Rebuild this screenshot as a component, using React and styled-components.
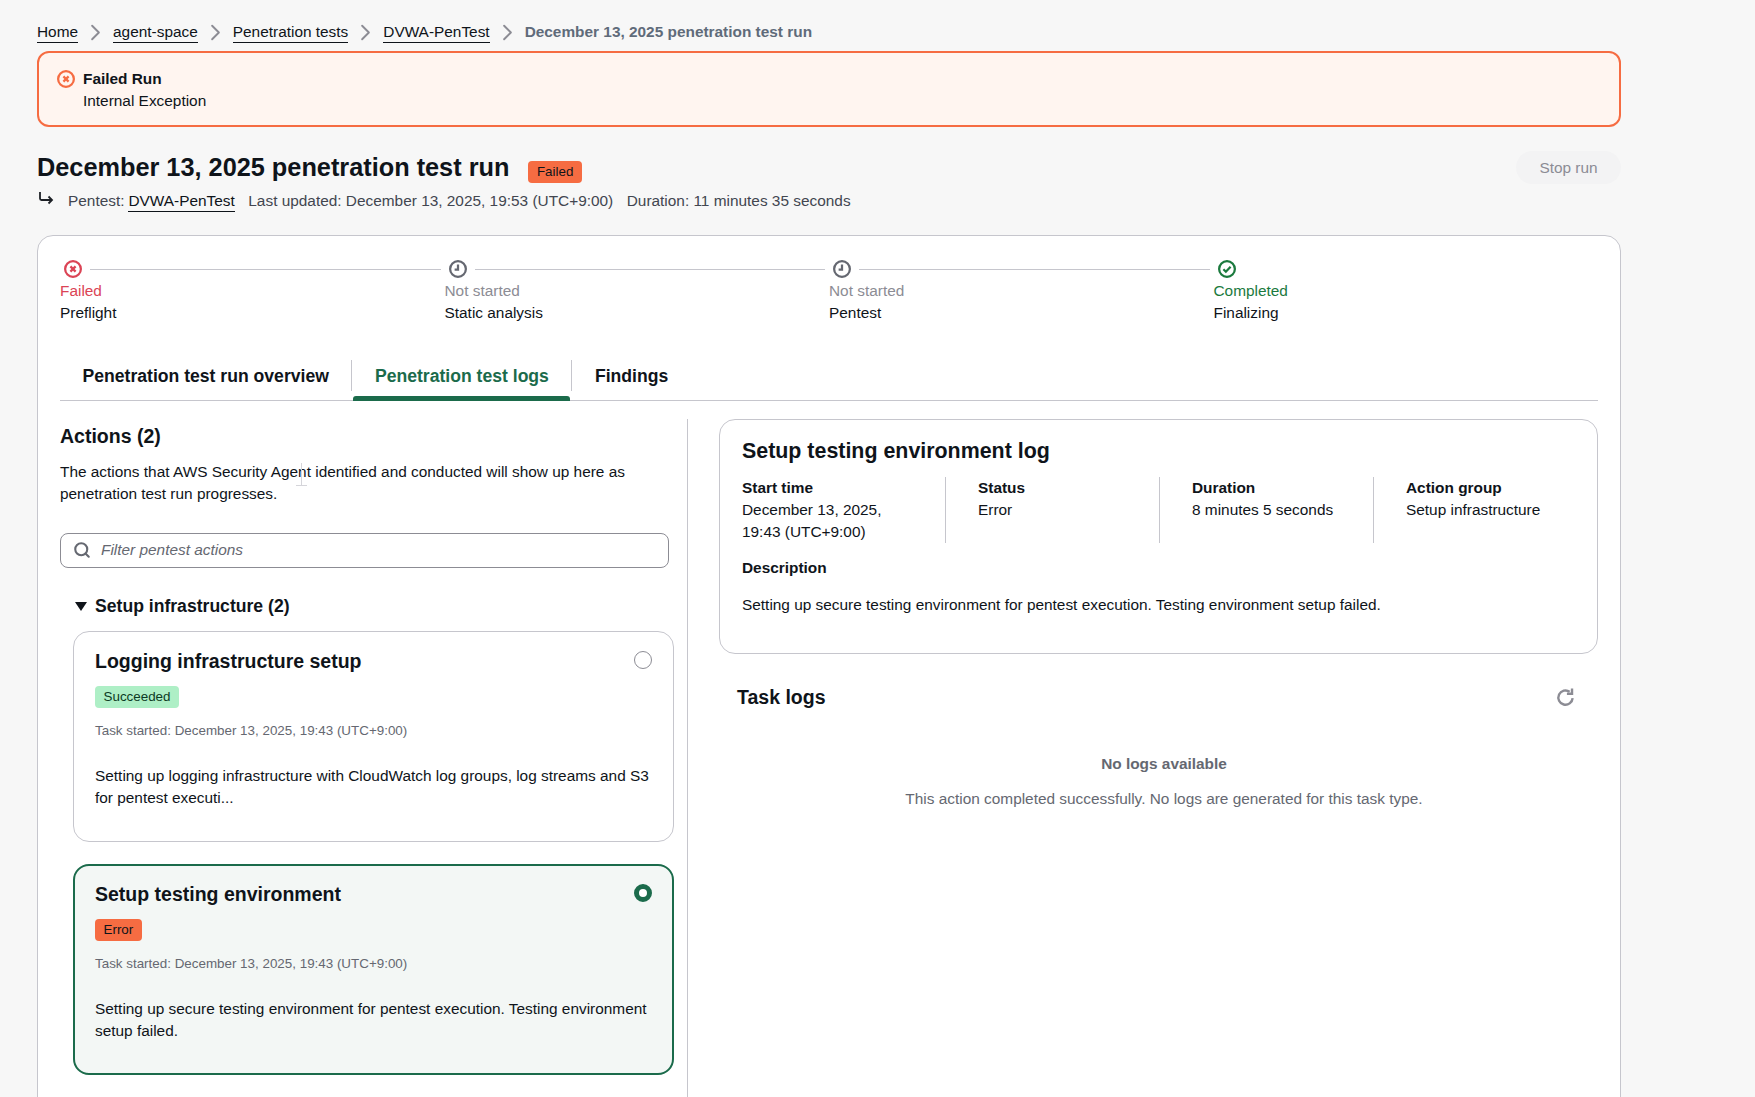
import React from "react";
import styled, { createGlobalStyle } from "styled-components";
import { ChevronRight, Search } from "lucide-react";

const Global = createGlobalStyle`
  html, body {
    margin: 0;
    height: 1097px;
    overflow: hidden;
    background: #f7f7f7;
    font-family: "Liberation Sans", Arial, sans-serif;
    font-size: 15.4px;
    line-height: 22px;
    color: #0f141a;
  }
  * { box-sizing: border-box; }
`;

const Page = styled.div`
  width: 1621px;
  padding: 21px 0 0 37px;
`;

const Crumbs = styled.nav`
  display: flex;
  align-items: center;
  height: 22px;
`;

const CrumbLink = styled.a`
  color: #0f141a;
  border-bottom: 1px solid #0f141a;
  line-height: 20px;
  margin-top: 1px;
`;

const CrumbSep = styled(ChevronRight)`
  width: 27px;
  height: 27px;
  color: #8c8c94;
  margin: 0 4px;
  flex: none;
`;

const CrumbCurrent = styled.span`
  color: #5f6b7a;
  font-weight: 700;
`;

const Alert = styled.div`
  display: flex;
  gap: 8px;
  height: 76px;
  margin-top: 8px;
  padding: 15px 18px;
  background: #fff5f0;
  border: 2px solid #f66c42;
  border-radius: 12px;
`;

const StatusIcon = styled.svg`
  width: 18px;
  height: 18px;
  margin-top: ${(p) => (p.$alert ? 2 : 0)}px;
  flex: none;
`;

const Strong = styled.div`
  font-weight: 700;
`;

const TitleRow = styled.div`
  display: flex;
  align-items: center;
  justify-content: space-between;
  margin-top: 23px;
  height: 34px;
`;

const TitleLeft = styled.div`
  display: flex;
  align-items: center;
  gap: 19px;
`;

const Title = styled.h1`
  margin: 0;
  font-size: 25.3px;
  line-height: 34px;
  font-weight: 700;
`;

const Badge = styled.span`
  display: block;
  width: fit-content;
  background: ${(p) => (p.$ok ? "#aeefc6" : "#f66c42")};
  color: ${(p) => (p.$ok ? "#0c3b24" : "#0f141a")};
  font-size: 13.4px;
  line-height: 22px;
  height: 22px;
  padding: 0 8.5px;
  border-radius: 4px;
`;

const TitleBadge = styled(Badge)`
  margin-top: 10px;
`;

const StopButton = styled.button`
  width: 105px;
  height: 33px;
  padding: 1px 0 0;
  border: 0;
  border-radius: 17px;
  background: #f3f3f4;
  color: #8c8c94;
  font: 15.4px "Liberation Sans", Arial, sans-serif;
`;

const Meta = styled.div`
  display: flex;
  align-items: center;
  height: 34px;
  color: #424650;
`;

const MetaIcon = styled.svg`
  width: 16px;
  height: 16px;
  margin: -5px 14px 0 1px;
  flex: none;
`;

const MetaLink = styled.a`
  color: #0f141a;
  border-bottom: 1px solid #0f141a;
  line-height: 20px;
  margin: 1px 0 0 4px;
`;

const MetaItem = styled.span`
  margin-left: 13.5px;
`;

const Card = styled.section`
  height: 900px;
  margin-top: 17px;
  padding: 22px;
  background: #fff;
  border: 1px solid #c6c6cd;
  border-radius: 16px;
`;

const Steps = styled.div`
  display: grid;
  grid-template-columns: repeat(4, 1fr);
`;

const Step = styled.div`
  display: flex;
  flex-direction: column;
`;

const StepHead = styled.div`
  display: flex;
  align-items: center;
  gap: 8px;
  height: 22px;
  padding-left: 4px;
`;

const StepLine = styled.div`
  flex: 1;
  height: 1px;
  background: #c6c6cd;
  margin-right: 4px;
`;

const StepState = styled.div`
  color: ${(p) => p.$color};
`;

const Tabs = styled.div`
  display: flex;
  height: 52px;
  margin-top: 25px;
  border-bottom: 1px solid #c6c6cd;
`;

const Tab = styled.div`
  position: relative;
  display: flex;
  align-items: center;
  height: 100%;
  padding: 3px 22.5px 0;
  font-size: 17.6px;
  font-weight: 700;
  color: ${(p) => (p.$active ? "#1b6b4b" : "#0f141a")};
  &::after {
    content: "";
    display: ${(p) => (p.$active ? "block" : "none")};
    position: absolute;
    left: 1px;
    right: 1px;
    bottom: -1px;
    height: 5px;
    border-radius: 3px 3px 0 0;
    background: #1b6b4b;
  }
`;

const TabSep = styled.div`
  width: 1px;
  height: 31px;
  margin-top: 11px;
  background: #c6c6cd;
`;

const Columns = styled.div`
  display: grid;
  grid-template-columns: 628px minmax(0, 1fr);
  margin-top: 18px;
`;

const LeftCol = styled.div`
  padding-right: 13px;
  border-right: 1px solid #c6c6cd;
  height: 700px;
`;

const RightCol = styled.div`
  padding-left: 31px;
`;

const H2 = styled.h2`
  margin: 0;
  font-size: 19.5px;
  line-height: 34px;
  font-weight: 700;
`;

const Para = styled.p`
  position: relative;
  margin: 8px 0 0;
`;

const TextCursor = styled.svg`
  position: absolute;
  left: 235px;
  top: 2px;
  width: 13px;
  height: 24px;
`;

const Filter = styled.label`
  display: flex;
  align-items: center;
  gap: 10px;
  height: 35px;
  margin-top: 28px;
  margin-right: 5px;
  padding: 0 12px 1px;
  border: 1px solid #8c8c94;
  border-radius: 8px;
  color: #656871;
  font-style: italic;
`;

const GroupHead = styled.div`
  display: flex;
  align-items: center;
  gap: 8px;
  margin: 26px 0 0 15px;
  height: 24px;
  font-size: 17.6px;
  font-weight: 700;
`;

const Caret = styled.span`
  width: 0;
  height: 0;
  border-left: 6px solid transparent;
  border-right: 6px solid transparent;
  border-top: 9px solid #0f141a;
`;

const ActionCard = styled.div`
  position: relative;
  height: 211px;
  margin: ${(p) => p.$mt}px 0 0 13px;
  padding: ${(p) => (p.$selected ? "15px 20px" : "16px 21px")};
  background: ${(p) => (p.$selected ? "#f3f7f5" : "#fff")};
  border: ${(p) => (p.$selected ? "2px solid #1b6b4b" : "1px solid #c6c6cd")};
  border-radius: 16px;
`;

const ActionTitle = styled.div`
  font-size: 19.5px;
  line-height: 26px;
  font-weight: 700;
  margin-bottom: 12px;
`;

const Radio = styled.span`
  position: absolute;
  top: ${(p) => (p.$on ? 18 : 19)}px;
  right: ${(p) => (p.$on ? 20 : 21)}px;
  width: 18px;
  height: 18px;
  border-radius: 50%;
  background: #fff;
  border: ${(p) => (p.$on ? "5px solid #1b6b4b" : "1px solid #8c8c94")};
`;

const TaskTime = styled.div`
  margin-top: 12px;
  font-size: 13.4px;
  color: #656871;
`;

const ActionText = styled.div`
  margin-top: 23px;
`;

const LogCard = styled.div`
  height: 235px;
  padding: 16px 22px;
  background: #fff;
  border: 1px solid #c6c6cd;
  border-radius: 16px;
`;

const LogTitle = styled.h2`
  margin: 0;
  font-size: 21.4px;
  line-height: 30px;
  font-weight: 700;
`;

const InfoGrid = styled.div`
  display: grid;
  grid-template-columns: 203px 214px 214px minmax(0, 1fr);
  margin-top: 11px;
`;

const InfoCell = styled.div`
  min-height: 66px;
  padding-left: ${(p) => (p.$first ? 0 : 32)}px;
  border-left: ${(p) => (p.$first ? "0" : "1px solid #c6c6cd")};
`;

const DescLabel = styled.div`
  font-weight: 700;
  margin-top: 14px;
`;

const DescText = styled.div`
  margin-top: 15px;
`;

const TaskHead = styled.div`
  display: flex;
  align-items: center;
  justify-content: space-between;
  margin-top: 28px;
  padding: 0 23px 0 18px;
  height: 30px;
`;

const RefreshIcon = styled.svg`
  width: 19px;
  height: 19px;
`;

const Empty = styled.div`
  margin-top: 41px;
  text-align: center;
  color: #656871;
  padding-left: 11px;
`;

const EmptyTitle = styled.div`
  font-weight: 700;
  margin-bottom: 13px;
`;

const FailedIcon = ({ color, alert }) => (
  <StatusIcon $alert={alert} viewBox="0 0 16 16" fill="none" stroke={color} strokeWidth="2">
    <circle cx="8" cy="8" r="7" />
    <path d="M5.7 5.7l4.6 4.6M10.3 5.7l-4.6 4.6" />
  </StatusIcon>
);

const ClockIcon = () => (
  <StatusIcon viewBox="0 0 16 16" fill="none" stroke="#656871" strokeWidth="2">
    <circle cx="8" cy="8" r="7" />
    <path d="M8 4v4.5H5" />
  </StatusIcon>
);

const DoneIcon = () => (
  <StatusIcon viewBox="0 0 16 16" fill="none" stroke="#1b7a3e" strokeWidth="2">
    <circle cx="8" cy="8" r="7" />
    <path d="M4.8 8.2l2.2 2.2 4.2-4.4" />
  </StatusIcon>
);

const crumbs = ["Home", "agent-space", "Penetration tests", "DVWA-PenTest"];

const steps = [
  { icon: <FailedIcon color="#db4455" />, state: "Failed", color: "#db4455", name: "Preflight", line: true },
  { icon: <ClockIcon />, state: "Not started", color: "#8c8c94", name: "Static analysis", line: true },
  { icon: <ClockIcon />, state: "Not started", color: "#8c8c94", name: "Pentest", line: true },
  { icon: <DoneIcon />, state: "Completed", color: "#1b7a3e", name: "Finalizing", line: false },
];

const info = [
  { label: "Start time", value: <>December 13, 2025,<br />19:43 (UTC+9:00)</> },
  { label: "Status", value: "Error" },
  { label: "Duration", value: "8 minutes 5 seconds" },
  { label: "Action group", value: "Setup infrastructure" },
];

export default function App() {
  return (
    <Page>
      <Global />
      <Crumbs>
        {crumbs.map((c) => (
          <React.Fragment key={c}>
            <CrumbLink>{c}</CrumbLink>
            <CrumbSep strokeWidth={1.7} />
          </React.Fragment>
        ))}
        <CrumbCurrent>December 13, 2025 penetration test run</CrumbCurrent>
      </Crumbs>

      <Alert>
        <FailedIcon color="#f66c42" alert />
        <div>
          <Strong>Failed Run</Strong>
          <div>Internal Exception</div>
        </div>
      </Alert>

      <TitleRow>
        <TitleLeft>
          <Title>December 13, 2025 penetration test run</Title>
          <TitleBadge>Failed</TitleBadge>
        </TitleLeft>
        <StopButton disabled>Stop run</StopButton>
      </TitleRow>

      <Meta>
        <MetaIcon viewBox="0 0 16 16" fill="none" stroke="#1d2026" strokeWidth="1.8">
          <path d="M2 1v6.5A1.5 1.5 0 0 0 3.5 9H14" />
          <path d="M10.5 5.5L14 9l-3.5 3.5" />
        </MetaIcon>
        <span>Pentest:</span>
        <MetaLink>DVWA-PenTest</MetaLink>
        <MetaItem>Last updated: December 13, 2025, 19:53 (UTC+9:00)</MetaItem>
        <MetaItem>Duration: 11 minutes 35 seconds</MetaItem>
      </Meta>

      <Card>
        <Steps>
          {steps.map((s) => (
            <Step key={s.name}>
              <StepHead>
                {s.icon}
                {s.line && <StepLine />}
              </StepHead>
              <StepState $color={s.color}>{s.state}</StepState>
              <div>{s.name}</div>
            </Step>
          ))}
        </Steps>

        <Tabs>
          <Tab>Penetration test run overview</Tab>
          <TabSep />
          <Tab $active>Penetration test logs</Tab>
          <TabSep />
          <Tab>Findings</Tab>
        </Tabs>

        <Columns>
          <LeftCol>
            <H2>Actions (2)</H2>
            <Para>
              The actions that AWS Security Agent identified and conducted will show up here as penetration test run
              progresses.
              <TextCursor viewBox="0 0 13 24" fill="none" stroke="#d5d5da" strokeWidth="1">
                <path d="M6.5 0v22M1 22.5h11" />
              </TextCursor>
            </Para>
            <Filter>
              <Search size={18} strokeWidth={2.8} />
              Filter pentest actions
            </Filter>
            <GroupHead>
              <Caret />
              Setup infrastructure (2)
            </GroupHead>

            <ActionCard $mt={13}>
              <ActionTitle>Logging infrastructure setup</ActionTitle>
              <Radio />
              <Badge $ok>Succeeded</Badge>
              <TaskTime>Task started: December 13, 2025, 19:43 (UTC+9:00)</TaskTime>
              <ActionText>
                Setting up logging infrastructure with CloudWatch log groups, log streams and S3 for pentest executi...
              </ActionText>
            </ActionCard>

            <ActionCard $mt={22} $selected>
              <ActionTitle>Setup testing environment</ActionTitle>
              <Radio $on />
              <Badge>Error</Badge>
              <TaskTime>Task started: December 13, 2025, 19:43 (UTC+9:00)</TaskTime>
              <ActionText>
                Setting up secure testing environment for pentest execution. Testing environment setup failed.
              </ActionText>
            </ActionCard>
          </LeftCol>

          <RightCol>
            <LogCard>
              <LogTitle>Setup testing environment log</LogTitle>
              <InfoGrid>
                {info.map((i, n) => (
                  <InfoCell key={i.label} $first={n === 0}>
                    <Strong>{i.label}</Strong>
                    <div>{i.value}</div>
                  </InfoCell>
                ))}
              </InfoGrid>
              <DescLabel>Description</DescLabel>
              <DescText>
                Setting up secure testing environment for pentest execution. Testing environment setup failed.
              </DescText>
            </LogCard>

            <TaskHead>
              <H2>Task logs</H2>
              <RefreshIcon viewBox="0 0 16 16" fill="none" stroke="#8c8c94" strokeWidth="2">
                <path d="M14 8.5A6 6 0 1 1 11.5 3.2" />
                <path d="M13.5 0.5v4.3H9.2" />
              </RefreshIcon>
            </TaskHead>

            <Empty>
              <EmptyTitle>No logs available</EmptyTitle>
              <div>This action completed successfully. No logs are generated for this task type.</div>
            </Empty>
          </RightCol>
        </Columns>
      </Card>
    </Page>
  );
}
